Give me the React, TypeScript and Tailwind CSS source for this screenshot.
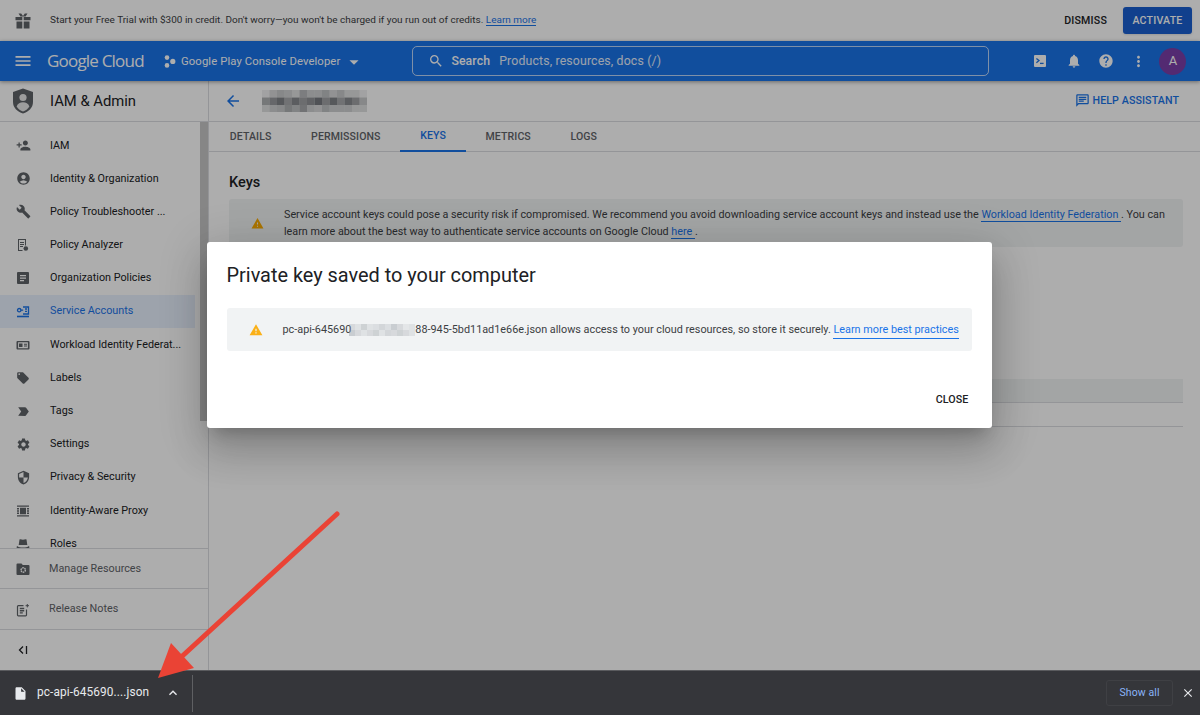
import React from 'react';
import {
  MdMenu, MdArrowDropDown, MdSearch, MdNotifications, MdHelp, MdMoreVert, MdArrowBack,
  MdPersonAdd, MdAccountCircle, MdBuild, MdLocalOffer, MdSettings, MdOutlineChat, MdWarning,
  MdInsertDriveFile, MdExpandLess, MdClose, MdLabelImportant, MdSecurity,
} from 'react-icons/md';

const Gift = () => (
  <svg width="16" height="16" viewBox="0 0 16 16" fill="#5f6368" className="shrink-0">
    <path d="M.5 4h6.800v3.200H.5zM8.700 4h6.800v3.200H8.700zM1.500 8.400h5.800V15.500H1.500zM8.700 8.400h5.800V15.500H8.700z" />
    <path d="M3.500.5h2.700L8 3l1.800-2.500h2.700L10.600 3.400H5.400z" />
  </svg>
);

const ProjectDots = () => (
  <svg width="12" height="13" viewBox="0 0 12 13" fill="#fff" className="shrink-0">
    <circle cx="3" cy="2.600" r="2.300" />
    <circle cx="8.800" cy="6.400" r="2.600" />
    <circle cx="3" cy="10.400" r="2.300" />
  </svg>
);

const CloudShell = () => (
  <svg width="14" height="14" viewBox="0 0 14 14">
    <rect x="1" y="1" width="12" height="12" rx="1" fill="#fff" />
    <path d="M3.400 4.400 6 6.600 3.400 8.800" fill="none" stroke="#1a73e8" strokeWidth="1.300" />
    <path d="M7 9.400h3.600" stroke="#1a73e8" strokeWidth="1.300" />
  </svg>
);

const ShieldLogo = () => (
  <svg width="20" height="26" viewBox="0 0 20 26" className="shrink-0">
    <path d="M10 .5 20 4v10c0 5.600-4.200 9.600-10 11.500C4.200 23.600 0 19.600 0 14V4z" fill="#5f6368" />
    <circle cx="10" cy="9.500" r="3.600" fill="#e8e8e8" />
    <path d="M3.600 18.400c1-3 3.600-4.200 6.400-4.200s5.400 1.200 6.400 4.200C14.800 21 12.400 22.800 10 23.400 7.600 22.800 5.200 21 3.600 18.400z" fill="#e8e8e8" />
  </svg>
);

const SmallSvg = ({ children }: { children: React.ReactNode }) => (
  <svg width="14" height="14" viewBox="0 0 14 14" fill="#5f6368">{children}</svg>
);

const PolicyAnalyzerIcon = () => (
  <SmallSvg>
    <path d="M2 1h8v6.500H9V2H3v10h3.500v1H2z" />
    <path d="M4 4h4v1H4zM4 6h4v1H4zM4 8h3v1H4z" />
    <circle cx="9.800" cy="10.500" r="2.300" />
  </SmallSvg>
);

const OrgPolicyIcon = () => (
  <SmallSvg>
    <path fillRule="evenodd" d="M2 1h10a1 1 0 0 1 1 1v10a1 1 0 0 1-1 1H2a1 1 0 0 1-1-1V2a1 1 0 0 1 1-1zm2 3v1.200h6V4zm0 2.500v1.200h6V6.500zM4 9v1.200h4V9z" />
  </SmallSvg>
);

const ServiceAccountIcon = ({ color }: { color: string }) => (
  <svg width="14" height="14" viewBox="0 0 14 14" fill="none" stroke={color} strokeWidth="1.300">
    <circle cx="3.200" cy="5.200" r="1.700" />
    <path d="M5 5.200h2.200M7 2h5.500v7H7" />
    <path d="M9 4h2M9 6.300h2" />
    <path d="M1 11.500h12" strokeWidth="1.600" />
  </svg>
);

const WorkloadIcon = () => (
  <SmallSvg>
    <path fillRule="evenodd" d="M1.500 3h11a1 1 0 0 1 1 1v6.500a1 1 0 0 1-1 1h-11a1 1 0 0 1-1-1V4a1 1 0 0 1 1-1zm.6 1.300v5.900h9.800V4.300zM3 5.500h3.500V9H3zm5 .2h3v1H8zm0 1.800h3v1H8z" />
  </SmallSvg>
);

const ProxyIcon = () => (
  <SmallSvg>
    <path d="M1 1.500h12v1.300H1zM1 11.200h12v1.300H1zM1 4h2v1.500H1zM1 6.300h2v1.500H1zM1 8.600h2v1.500H1zM11 4h2v1.500h-2zM11 6.300h2v1.500h-2zM11 8.600h2v1.500h-2zM4 3.800h6v6.400H4z" />
  </SmallSvg>
);

const HatIcon = () => (
  <SmallSvg>
    <path d="M3.500 2.500c1.200-.5 2.300.3 3.500.3s2.300-.8 3.500-.3l.8 5.500H2.700zM1 9c1.500 1 3.500 1.500 6 1.500S11.500 10 13 9l.5 1.500C12 12 9.500 12.500 7 12.500S2 12 .5 10.500z" />
  </SmallSvg>
);

const ManageIcon = () => (
  <svg width="14" height="14" viewBox="0 0 14 14">
    <path d="M1.500 1.500h4l1.300 1.500h5.700a1 1 0 0 1 1 1v8a1 1 0 0 1-1 1h-11a1 1 0 0 1-1-1V2.500a1 1 0 0 1 1-1z" fill="#5f6368" />
    <circle cx="7.200" cy="8" r="2.200" fill="none" stroke="#fff" strokeWidth="1.400" strokeDasharray="1.500 .6" />
  </svg>
);

const ReleaseIcon = () => (
  <svg width="14" height="14" viewBox="0 0 14 14" fill="none" stroke="#5f6368" strokeWidth="1.200">
    <path d="M10.500 6.500V12a.8.800 0 0 1-.8.800H2.300a.8.800 0 0 1-.8-.8V3.500a.8.800 0 0 1 .8-.8h5.200" />
    <path d="M3.800 5.500h4.400M3.800 7.700h4.400M3.800 9.900h3" strokeWidth="1.400" />
    <path d="M11.300 1v3.400M9.600 2.700H13" strokeWidth="1" />
  </svg>
);

const Mosaic = ({ cols, cells, size, color }: { cols: number; cells: number[]; size: number; color: string }) => (
  <svg width={cols * size} height={(cells.length / cols) * size} className="shrink-0" aria-hidden="true">
    {cells.map((o, i) => (
      <rect key={i} x={(i % cols) * size} y={Math.floor(i / cols) * size} width={size} height={size} fill={color} fillOpacity={o} />
    ))}
  </svg>
);

const NAV = [
  { label: 'IAM', icon: <MdPersonAdd size={15} /> },
  { label: 'Identity & Organization', icon: <MdAccountCircle size={15} /> },
  { label: 'Policy Troubleshooter ...', icon: <MdBuild size={15} /> },
  { label: 'Policy Analyzer', icon: <PolicyAnalyzerIcon /> },
  { label: 'Organization Policies', icon: <OrgPolicyIcon /> },
  { label: 'Service Accounts', icon: <ServiceAccountIcon color="#1a73e8" />, active: true },
  { label: 'Workload Identity Federat...', icon: <WorkloadIcon /> },
  { label: 'Labels', icon: <MdLocalOffer size={14} /> },
  { label: 'Tags', icon: <MdLabelImportant size={15} /> },
  { label: 'Settings', icon: <MdSettings size={15} /> },
  { label: 'Privacy & Security', icon: <MdSecurity size={15} /> },
  { label: 'Identity-Aware Proxy', icon: <ProxyIcon /> },
  { label: 'Roles', icon: <HatIcon /> },
];

const TABS = ['DETAILS', 'PERMISSIONS', 'KEYS', 'METRICS', 'LOGS'];

const TITLE_CELLS = [
  .1, .25, .35, .3, .2, .45, .3, .3, .4, .25, .35, .2, .2, .1,
  .5, .65, .8, .55, .75, .6, .7, .85, .6, .8, .55, .75, .6, .35,
  .2, .3, .35, .5, .4, .55, .3, .25, .4, .3, .3, .3, .2, .2,
];

const KEY_CELLS = [
  .3, .2, .4, .2, .25, .35, .25, .45, .3, .15, .2,
  .45, .3, .2, .3, .4, .2, .35, .3, .4, .3, .2,
];

export default function App() {
  return (
    <div className="relative w-[1200px] h-[715px] overflow-hidden bg-white text-[#202124] font-['Roboto',sans-serif]">
      <div className="relative h-[670px] overflow-hidden">
        {/* Trial banner */}
        <div className="h-[41px] flex items-center pl-[15px] pr-[8px] bg-white">
          <Gift />
          <span className="ml-[19px] text-[9.97px] text-[#3c4043]">
            Start your Free Trial with $300 in credit. Don't worry—you won't be charged if you run out of credits.{' '}
            <span className="text-[#1a73e8] border-b border-[#1a73e8]">Learn more</span>
          </span>
          <span className="ml-auto text-[10.6px] font-medium tracking-[.2px]">DISMISS</span>
          <button className="ml-[16px] w-[69px] h-[27px] rounded-[3px] bg-[#1a5fd0] text-white text-[10.6px] font-medium tracking-[.2px] shadow-sm">ACTIVATE</button>
        </div>

        {/* Blue header */}
        <div className="relative z-10 h-[40px] flex items-center bg-[#1a73e8] text-white shadow-[0_1px_4px_rgba(0,0,0,.4)]">
          <MdMenu size={20} className="ml-[13px]" />
          <span className="ml-[14px] w-[97px] text-[17px] font-['Open_Sans',sans-serif] tracking-[-.8px] whitespace-nowrap">Google Cloud</span>
          <span className="ml-[20px] pt-px"><ProjectDots /></span>
          <span className="ml-[5px] pt-[2px] text-[11.3px] tracking-[.1px]">Google Play Console Developer</span>
          <MdArrowDropDown size={22} className="ml-[3px] mt-px" />
          <div className="ml-[47px] w-[577px] h-[30px] flex items-center rounded-[5px] border border-white/70 pl-[15px] text-[12.3px]">
            <MdSearch size={16} />
            <span className="ml-[7px] font-medium tracking-[.1px]">Search</span>
            <span className="ml-[9px] tracking-[.15px] text-white/90">Products, resources, docs (/)</span>
          </div>
          <div className="ml-[44px] flex items-center">
            <CloudShell />
            <span className="ml-[19px]"><MdNotifications size={16} /></span>
            <span className="ml-[16px]"><MdHelp size={16} /></span>
            <span className="ml-[16px]"><MdMoreVert size={17} /></span>
            <span className="ml-[12px] w-[27px] h-[27px] rounded-full bg-[#7b3fa8] flex items-center justify-center text-[13px]">A</span>
          </div>
        </div>

        <div className="flex h-[589px]">
          {/* Sidebar */}
          <div className="w-[209px] shrink-0 flex flex-col border-r border-[#dadce0]">
            <div className="h-[41px] shrink-0 flex items-center pl-[13px] border-b border-[#dadce0]">
              <ShieldLogo />
              <span className="ml-[17px] text-[14.8px] font-normal">IAM & Admin</span>
            </div>
            <div className="h-[426px] shrink-0 flex overflow-hidden">
              <div className="w-[195px] shrink-0 pt-[7px]">
                {NAV.map((item) => (
                  <div key={item.label} className={`h-[33.2px] flex items-center pl-[16px] ${item.active ? 'bg-[#e8f0fe] text-[#1a73e8]' : ''}`}>
                    <span className={`w-[34px] shrink-0 ${item.active ? '' : 'text-[#5f6368]'}`}>{item.icon}</span>
                    <span className="text-[10.8px] whitespace-nowrap">{item.label}</span>
                  </div>
                ))}
              </div>
              <div className="ml-[5px] w-[8px] h-[299px] bg-[#c6c6c6]" />
            </div>
            <div className="h-[40px] shrink-0 flex items-center pl-[16px] pt-px border-t border-[#dadce0] text-[#5f6368] text-[10.8px]">
              <span className="w-[33px]"><ManageIcon /></span>Manage Resources
            </div>
            <div className="h-[41px] shrink-0 flex items-center pl-[16px] pt-px border-t border-[#dadce0] text-[#5f6368] text-[10.8px]">
              <span className="w-[33px]"><ReleaseIcon /></span>Release Notes
            </div>
            <div className="flex-1 flex items-center pl-[18px] border-t border-[#dadce0]">
              <svg width="10" height="10" viewBox="0 0 10 10" fill="none" stroke="#202124" strokeWidth="1.300">
                <path d="M5 1.500 1.500 5 5 8.500M8.500 1v8" />
              </svg>
            </div>
          </div>

          {/* Main content */}
          <div className="flex-1 min-w-0">
            <div className="h-[41px] flex items-center pl-[15px] pr-[21px] border-b border-[#dadce0]">
              <MdArrowBack size={18} className="text-[#1a73e8]" />
              <span className="ml-[20px]"><Mosaic cols={14} cells={TITLE_CELLS} size={7.5} color="#5f6368" /></span>
              <span className="ml-auto flex items-center text-[#1a73e8] text-[10.65px] font-medium tracking-[.1px]">
                <MdOutlineChat size={15} className="mr-[3px]" />HELP ASSISTANT
              </span>
            </div>
            <div className="h-[30px] flex pl-px border-b border-[#dadce0] text-[10.55px] font-medium tracking-[.1px] text-[#5f6368]">
              {TABS.map((tab) => (
                <div key={tab} className={`h-[30px] flex items-center justify-center px-[19.8px] ${tab === 'KEYS' ? 'text-[#1a73e8] border-b-2 border-[#1a73e8]' : ''}`}>{tab}</div>
              ))}
            </div>
            <div className="pl-[20px] pr-[17px]">
              <div className="mt-[21px] h-[20px] flex items-center text-[14.5px] font-medium">Keys</div>
              <div className="mt-[6px] h-[48px] flex items-center rounded-[3px] bg-[#f1f3f4] pl-[22px] pr-[10px]">
                <MdWarning size={13} className="shrink-0 text-[#f9ab00]" />
                <p className="ml-[20px] text-[10.78px] leading-[17px] text-[#3c4043]">
                  Service account keys could pose a security risk if compromised. We recommend you avoid downloading service account keys and instead use the{' '}
                  <span className="text-[#1a73e8] border-b border-[#1a73e8]">Workload Identity Federation </span> . You can learn more about the best way to authenticate service accounts on Google Cloud{' '}
                  <span className="text-[#1a73e8] border-b border-[#1a73e8]">here </span> .
                </p>
              </div>
              <div className="mt-[132px] h-[24px] bg-[#f1f3f4] border-b border-[#dadce0]" />
              <div className="h-[24px] border-b border-[#dadce0]" />
            </div>
          </div>
        </div>

        {/* Scrim and dialog */}
        <div className="absolute inset-0 z-20 bg-black/[.32] flex items-center justify-center pr-[2px]">
          <div className="w-[785px] h-[186px] bg-white rounded-[3px] px-[20px] flex flex-col shadow-[0_11px_15px_-7px_rgba(0,0,0,.2),0_24px_38px_3px_rgba(0,0,0,.14),0_9px_46px_8px_rgba(0,0,0,.12)]">
            <h2 className="mt-[20px] h-[27px] flex items-center text-[19.9px] font-normal">Private key saved to your computer</h2>
            <div className="mt-[19px] h-[43px] flex items-center rounded-[3px] bg-[#f1f3f4] pl-[22px]">
              <MdWarning size={14} className="shrink-0 text-[#fbb017]" />
              <span className="ml-[20px] pt-[2px] flex items-center text-[10.83px] text-[#3c4043] whitespace-nowrap">
                pc-api-645690
                <span className="-ml-[2px] flex"><Mosaic cols={11} cells={KEY_CELLS} size={6} color="#9aa0a6" /></span>
                <span>88-945-5bd11ad1e66e.json allows access to your cloud resources, so store it securely.&nbsp;</span>
                <span className="text-[#1a73e8] border-b border-[#1a73e8]">Learn more best practices</span>
              </span>
            </div>
            <div className="mt-[41px] flex justify-end pr-[3px] text-[10.7px] font-medium tracking-[.1px]">CLOSE</div>
          </div>
        </div>
      </div>

      {/* Download bar */}
      <div className="h-[45px] flex items-center bg-[#35363a] text-[#e8eaed] border-t border-[#5a5b5e]">
        <MdInsertDriveFile size={15} className="ml-[13px]" />
        <span className="ml-[9px] text-[11.85px] tracking-[.1px]">pc-api-645690....json</span>
        <MdExpandLess size={16} className="ml-[16px]" />
        <div className="ml-[11px] w-px h-[37px] bg-[#5f6063]" />
        <span className="ml-auto w-[67px] h-[26px] flex items-center justify-center rounded-[3px] border border-[#3f4044] text-[#8ab4f8] text-[10.5px] tracking-[.1px]">Show all</span>
        <MdClose size={14} className="ml-[8px] mr-[5px]" />
      </div>

      {/* Annotation arrow */}
      <svg className="absolute inset-0 z-30 pointer-events-none" width="1200" height="715" viewBox="0 0 1200 715">
        <path d="M337 514 178 660" stroke="#ea4335" strokeWidth="5" strokeLinecap="round" />
        <path d="M158 678 171 643 194 668z" fill="#ea4335" />
      </svg>
    </div>
  );
}
